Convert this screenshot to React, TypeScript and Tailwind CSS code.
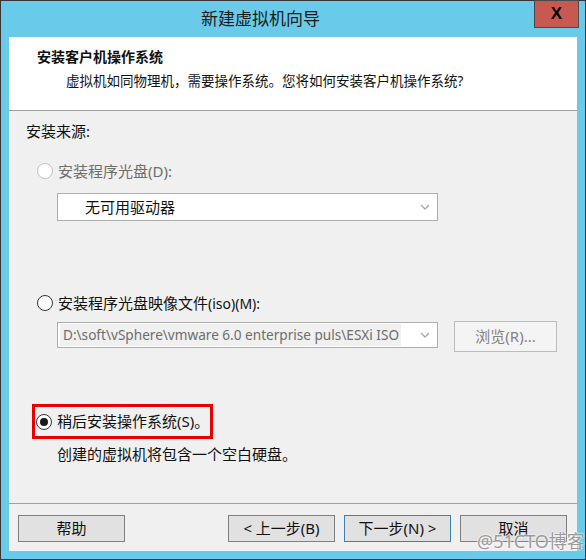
import React from 'react'

const font = "font-['Noto_Sans','Noto_Sans_CJK_SC',sans-serif]"

function Chevron() {
  return (
    <svg width="10" height="6" viewBox="0 0 10 6" className="shrink-0">
      <path d="M1 1 L5 5 L9 1" fill="none" stroke="#a8a8a8" strokeWidth="1.3" />
    </svg>
  )
}

function Radio({ checked = false, disabled = false }: { checked?: boolean; disabled?: boolean }) {
  return (
    <span
      className={`flex h-[16px] w-[16px] shrink-0 items-center justify-center rounded-full border bg-white ${
        disabled ? 'border-[#c2c2c2]' : 'border-[#333333]'
      }`}
    >
      {checked && <span className="h-[8px] w-[8px] rounded-full bg-[#1a1a1a]" />}
    </span>
  )
}

function Button({ label, primary = false }: { label: string; primary?: boolean }) {
  return (
    <button
      className={`flex h-[27px] w-[107px] items-center justify-center border bg-[#e1e1e1] text-[15px] text-[#111] ${
        primary ? 'border-[#3c7fb1]' : 'border-[#7f7f7f]'
      }`}
    >
      {label}
    </button>
  )
}

export default function App() {
  return (
    <div className={`relative flex h-[560px] w-[586px] flex-col border border-[#363636] bg-[#69cbe9] ${font}`}>
      {/* title bar */}
      <div className="flex h-[36px] shrink-0 items-start">
        <div className="flex h-full flex-1 items-center justify-center pr-[14px] text-[17px] text-[#1a1a1a]">
          新建虚拟机向导
        </div>
        <div className="-mt-px mr-[6px] flex h-[28px] w-[45px] items-center justify-center border border-[#4a4a4a] bg-[#c75a50] pb-[1px] font-['Liberation_Sans',sans-serif] text-[17px] font-bold text-black">
          X
        </div>
      </div>

      <div className="mx-[8px] mb-[8px] flex flex-1 flex-col bg-[#f0f0f0]">
        {/* header */}
        <div className="h-[74px] shrink-0 border-b border-[#a0a0a0] bg-white pl-[28px] pt-[10px]">
          <p className="text-[14px] font-bold leading-[20px] text-[#111]">安装客户机操作系统</p>
          <p className="mt-[4px] pl-[29px] text-[13.5px] leading-[20px] text-[#111]">
            虚拟机如同物理机，需要操作系统。您将如何安装客户机操作系统?
          </p>
        </div>

        {/* body */}
        <div className="flex flex-1 flex-col pl-[17px] pt-[10px] text-[15px] text-[#111]">
          <p className="leading-[20px]">安装来源:</p>

          <label className="ml-[11px] mt-[20px] flex h-[20px] items-center gap-[5px] text-[#6d6d6d]">
            <Radio disabled />
            安装程序光盘(D):
          </label>

          <div className="ml-[31px] mt-[12px] flex h-[28px] w-[381px] items-center justify-between border border-[#adadad] bg-white pl-[27px] pr-[7px]">
            <span className="text-[#111]">无可用驱动器</span>
            <Chevron />
          </div>

          <label className="ml-[11px] mt-[72px] flex h-[20px] items-center gap-[5px]">
            <Radio />
            <span className="whitespace-nowrap">
              安装程序光盘映像文件<span className="text-[14px]">(iso)(M):</span>
            </span>
          </label>

          <div className="ml-[31px] mt-[8px] flex items-start gap-[16px]">
            <div className="mt-px flex h-[26px] w-[381px] items-center justify-between border border-[#adadad] bg-white pl-[2px] pr-[7px]">
              <span className="whitespace-nowrap bg-[#f0f0f0] pl-[3px] pr-[2px] text-[13.6px] leading-[22px] text-[#6d6d6d]">
                D:\soft\vSphere\vmware 6.0 enterprise puls\ESXi ISO
              </span>
              <Chevron />
            </div>
            <button className="flex h-[31px] w-[103px] items-center justify-center border border-[#bcbcbc] bg-[#f4f4f4] text-[15px] text-[#838383]">
              浏览(R)...
            </button>
          </div>

          <div className="ml-[6px] mt-[52px] flex h-[35px] w-[181px] items-center gap-[5px] border-[3px] border-[#e60000] pl-[1px]">
            <Radio checked />
            <span className="whitespace-nowrap">稍后安装操作系统(S)。</span>
          </div>

          <p className="ml-[31px] mt-[5px] leading-[20px]">创建的虚拟机将包含一个空白硬盘。</p>
        </div>

        {/* footer */}
        <div className="flex h-[48px] shrink-0 items-start border-t border-[#a0a0a0] pl-[9px] pt-[11px]">
          <Button label="帮助" />
          <div className="ml-[103px] flex gap-[9px]">
            <Button label="< 上一步(B)" />
            <Button label="下一步(N) >" primary />
            <Button label="取消" />
          </div>
        </div>
      </div>

      <span className="pointer-events-none absolute left-[476px] top-[529px] text-[18px] leading-[22px] text-[#9a9a9a] [text-shadow:0_0_2px_#fff,0_0_2px_#fff]">
        @51CTO博客
      </span>
    </div>
  )
}
